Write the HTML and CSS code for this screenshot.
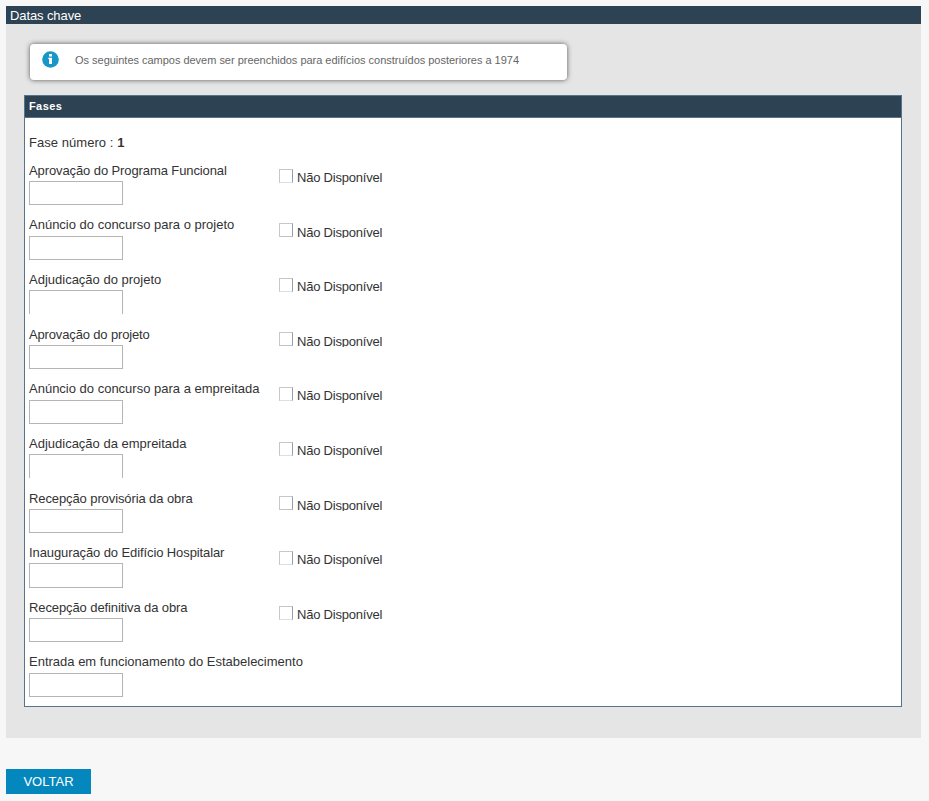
FILE: index.html
```html
<!DOCTYPE html>
<html lang="pt">
<head>
<meta charset="utf-8">
<title>Datas chave</title>
<link rel="stylesheet" href="styles.css">
</head>
<body>
<main class="panel">
  <h1 class="panel-title">Datas chave</h1>
  <div class="notice">
    <svg class="info" viewBox="0 0 17 17"><circle cx="8.5" cy="8.5" r="8.3"/><path d="M7 3h3v2.5H7zM6.3 6.7H10V13H7V8h-.7z"/></svg>
    <p class="notice-text">Os seguintes campos devem ser preenchidos para edifícios construídos posteriores a 1974</p>
  </div>
  <section class="phases">
    <h2 class="phases-title">Fases</h2>
    <p class="phase-number">Fase número : <b>1</b></p>
    <div class="row"><div class="field tight"><label>Aprovação do Programa Funcional</label><input type="text"></div><label class="check"><input type="checkbox"><span>Não Disponível</span></label></div>
    <div class="row"><div class="field"><label>Anúncio do concurso para o projeto</label><input type="text"></div><label class="check clip"><input type="checkbox"><span>Não Disponível</span></label></div>
    <div class="row"><div class="field"><label>Adjudicação do projeto</label><input type="text" class="open"></div><label class="check"><input type="checkbox"><span>Não Disponível</span></label></div>
    <div class="row"><div class="field tighter"><label>Aprovação do projeto</label><input type="text"></div><label class="check clip"><input type="checkbox"><span>Não Disponível</span></label></div>
    <div class="row"><div class="field"><label>Anúncio do concurso para a empreitada</label><input type="text"></div><label class="check"><input type="checkbox"><span>Não Disponível</span></label></div>
    <div class="row"><div class="field"><label>Adjudicação da empreitada</label><input type="text" class="open"></div><label class="check"><input type="checkbox"><span>Não Disponível</span></label></div>
    <div class="row"><div class="field tight"><label>Recepção provisória da obra</label><input type="text"></div><label class="check clip"><input type="checkbox"><span>Não Disponível</span></label></div>
    <div class="row"><div class="field tight"><label>Inauguração do Edifício Hospitalar</label><input type="text"></div><label class="check"><input type="checkbox"><span>Não Disponível</span></label></div>
    <div class="row"><div class="field tight"><label>Recepção definitiva da obra</label><input type="text"></div><label class="check"><input type="checkbox"><span>Não Disponível</span></label></div>
    <div class="row"><div class="field"><label>Entrada em funcionamento do Estabelecimento</label><input type="text"></div></div>
  </section>
</main>
<button class="back" type="button">VOLTAR</button>
</body>
</html>
```
FILE: styles.css
```css
* { box-sizing: border-box; }
body {
  margin: 0;
  padding: 6px 8px 0 6px;
  background: #f7f7f7;
  color: #333;
  font: 13px/16px "Liberation Sans", Arial, sans-serif;
}
h1, h2, p { margin: 0; font-weight: normal; }
.panel { height: 732px; background: #e5e5e5; }
.panel-title {
  height: 18px;
  padding-left: 4px;
  background: #2d4252;
  color: #fff;
  font-size: 13px;
  line-height: 19px;
  letter-spacing: -0.1px;
}
.notice {
  display: flex;
  width: 537px;
  height: 36px;
  margin: 20px 0 0 24px;
  padding: 7px 0 0 12px;
  border-radius: 4px;
  background: #fff;
  box-shadow: 0 0 5px #555;
}
.info { width: 17px; height: 17px; fill: #1697c6; }
.info path { fill: #fff; }
.notice-text {
  margin-left: 16px;
  color: #666;
  font-size: 11px;
  line-height: 19px;
  letter-spacing: -0.02px;
}
.phases {
  width: 878px;
  height: 612px;
  margin: 15px 0 0 18px;
  border: 1px solid #58738a;
  background: #fff;
}
.phases-title {
  height: 22px;
  padding-left: 4px;
  border-bottom: 1px solid #58738a;
  background: #2d4252;
  color: #fff;
  font-size: 11px;
  font-weight: bold;
  line-height: 21px;
  letter-spacing: 0.4px;
}
.phase-number { height: 44.578px; padding: 17px 0 0 4px; letter-spacing: 0.05px; }
.row { display: flex; height: 54.657px; padding-left: 4px; }
.field { width: 250px; white-space: nowrap; }
.field label { display: block; height: 18.33px; }
.tight { letter-spacing: -0.1px; }
.tighter { letter-spacing: -0.15px; }
.field input {
  display: block;
  width: 94px;
  height: 24.2px;
  border: 1px solid #b5b5b5;
  background: #fff;
}
.field .open { border-bottom: 0; }
.check {
  display: flex;
  height: 26px;
  padding-top: 5.94px;
  letter-spacing: -0.21px;
  white-space: nowrap;
}
.check input {
  appearance: none;
  width: 14px;
  height: 14px;
  margin: 0;
  border: 1px solid #c4c8cb;
  border-right-color: #8fa0b5;
  border-bottom-color: #dcdfe2;
}
.check span { height: 16px; margin: 1.35px 0 0 4px; }
.clip input { border-bottom-color: #bfc3c6; }
.clip span { height: 13px; overflow: hidden; }
.back {
  display: block;
  width: 85px;
  height: 25px;
  margin-top: 31px;
  padding: 0;
  border: 0;
  background: #0487bd;
  color: #fff;
  font: 13px/25px "Liberation Sans", Arial, sans-serif;
}
```
